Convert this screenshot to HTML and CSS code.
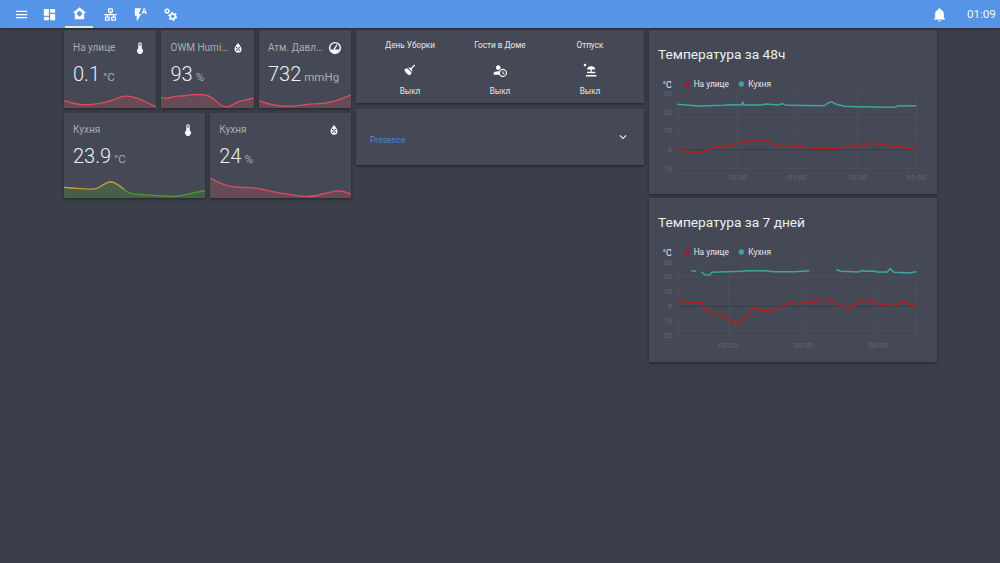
FILE: index.html
```html
<!DOCTYPE html>
<html lang="ru">
<head>
<meta charset="utf-8">
<title>Dashboard</title>
<link rel="stylesheet" href="styles.css">
</head>
<body>
<header class="topbar">
  <nav class="tabs">
    <a class="tab tab-menu"><svg class="ico" viewBox="0 0 24 24"><path d="M3,6H21V8H3V6M3,11H21V13H3V11M3,16H21V18H3V16Z"/></svg></a>
    <a class="tab tab-menu"><svg class="ico" viewBox="0 0 24 24"><path d="M3 3h8v11H3zM13 3h8v6h-8zM13 11h8v10h-8zM3 16h8v5H3z"/></svg></a>
    <a class="tab tab-active"><svg class="ico" viewBox="0 0 24 24"><path fill-rule="evenodd" d="M12 2 1 11h3.500v10h15V11H23zM12 7.500l4 3.200v2.300l-4 4-4-4v-2.300z"/></svg></a>
    <a class="tab"><svg class="ico" viewBox="0 0 24 24"><path d="M10,2C8.89,2 8,2.89 8,4V7C8,8.11 8.89,9 10,9H11V11H2V13H6V15H5C3.89,15 3,15.89 3,17V20C3,21.11 3.89,22 5,22H9C10.11,22 11,21.11 11,20V17C11,15.89 10.11,15 9,15H8V13H16V15H15C13.89,15 13,15.89 13,17V20C13,21.11 13.89,22 15,22H19C20.11,22 21,21.11 21,20V17C21,15.89 20.11,15 19,15H18V13H22V11H13V9H14C15.11,9 16,8.11 16,7V4C16,2.89 15.11,2 14,2H10M10,4H14V7H10V4M5,17H9V20H5V17M15,17H19V20H15V17Z"/></svg></a>
    <a class="tab"><svg class="ico" viewBox="0 0 24 24"><path d="M16.85,6.85H19.15L18,3.15M19,2L22.2,11H20.3L19.6,9H16.4L15.7,11H13.8L17,2M3,2V14H6V23L13,11H9L13,2H3Z"/></svg></a>
    <a class="tab"><svg class="ico" viewBox="0 0 24 24"><circle class="cog-small" cx="6.500" cy="6.500" r="3"/><circle class="cog-big" cx="15.500" cy="15" r="4"/><circle class="cog-teeth" cx="15.500" cy="15" r="6.300"/></svg></a>
  </nav>
  <div class="topbar-right">
    <svg class="ico bell" viewBox="0 0 24 24"><path d="M21,19V20H3V19L5,17V11C5,7.9 7.03,5.17 10,4.29C10,4.19 10,4.1 10,4A2,2 0 0,1 12,2A2,2 0 0,1 14,4C14,4.1 14,4.19 14,4.29C16.97,5.17 19,7.9 19,11V17L21,19M14,21A2,2 0 0,1 12,23A2,2 0 0,1 10,21"/></svg>
    <span class="clock">01:09</span>
  </div>
</header>

<main class="page">
  <section class="col col-sensors">
    <div class="row row-three">
      <article class="card sensor">
        <div class="sensor-head"><span class="sensor-name">На улице</span><svg class="ico sensor-ico" viewBox="0 0 24 24"><path d="M15 13V5A3 3 0 0 0 9 5V13A5 5 0 1 0 15 13M12 4A1 1 0 0 1 13 5V8H11V5A1 1 0 0 1 12 4Z"/></svg></div>
        <div class="sensor-value">0.1<span class="unit">°C</span></div>
        <svg class="spark" viewBox="10 195 280 45" preserveAspectRatio="none"><path class="spark-fill" d="M10 218L35 225Q60 232 85 230Q110 228 130 224Q150 220 170 211Q190 202 210 205Q230 208 260 223L290 238V240H10Z"/><path class="spark-line" d="M10 218L35 225Q60 232 85 230Q110 228 130 224Q150 220 170 211Q190 202 210 205Q230 208 260 223L290 238"/></svg>
      </article>
      <article class="card sensor">
        <div class="sensor-head"><span class="sensor-name">OWM Humidity</span><svg class="ico sensor-ico" viewBox="0 0 24 24"><path d="M12,3.25C12,3.25 6,10 6,14C6,17.32 8.69,20 12,20A6,6 0 0,0 18,14C18,10 12,3.25 12,3.25M14.47,9.97L15.53,11.03L9.53,17.03L8.47,15.97M9.75,10A1.25,1.25 0 0,1 11,11.25A1.25,1.25 0 0,1 9.75,12.5A1.25,1.25 0 0,1 8.5,11.25A1.25,1.25 0 0,1 9.75,10M14.25,14.5A1.25,1.25 0 0,1 15.5,15.75A1.25,1.25 0 0,1 14.25,17A1.25,1.25 0 0,1 13,15.75A1.25,1.25 0 0,1 14.25,14.5Z"/></svg></div>
        <div class="sensor-value">93<span class="unit">%</span></div>
        <svg class="spark" viewBox="303 195 279 45" preserveAspectRatio="none"><path class="spark-fill" d="M303 208L311.500 210.500Q320 213 332.500 208.500Q345 204 360 204Q375 204 387.500 201.500Q400 199 420 199.500Q440 200 450 206Q460 212 475 224Q490 236 500 236.500Q510 237 522.500 228.500Q535 220 547.500 218Q560 216 571 213L582 210V240H303Z"/><path class="spark-line" d="M303 208L311.500 210.500Q320 213 332.500 208.500Q345 204 360 204Q375 204 387.500 201.500Q400 199 420 199.500Q440 200 450 206Q460 212 475 224Q490 236 500 236.500Q510 237 522.500 228.500Q535 220 547.500 218Q560 216 571 213L582 210"/></svg>
      </article>
      <article class="card sensor">
        <div class="sensor-head"><span class="sensor-name">Атм. Давление</span><svg class="ico sensor-ico" viewBox="0 0 24 24"><path fill-rule="evenodd" d="M12 1.500a10.500 10.500 0 1 0 0 21 10.500 10.500 0 0 0 0-21zm0 2.500a8 8 0 0 1 7.600 10.500H4.400A8 8 0 0 1 12 4z"/><path d="m10.800 11.500 4-6 1.700 1-3.700 6.200a1.700 1.700 0 1 1-2-1.200z"/></svg></div>
        <div class="sensor-value">732<span class="unit">mmHg</span></div>
        <svg class="spark" viewBox="597 195 278 45" preserveAspectRatio="none"><path class="spark-fill" d="M597 218L618.500 225Q640 232 665 234Q690 236 720 232Q750 228 775 227Q800 226 820 220.500Q840 215 857.500 207.500L875 200V240H597Z"/><path class="spark-line" d="M597 218L618.500 225Q640 232 665 234Q690 236 720 232Q750 228 775 227Q800 226 820 220.500Q840 215 857.500 207.500L875 200"/></svg>
      </article>
    </div>
    <div class="row row-two">
      <article class="card sensor sensor-wide">
        <div class="sensor-head"><span class="sensor-name">Кухня</span><svg class="ico sensor-ico" viewBox="0 0 24 24"><path d="M15 13V5A3 3 0 0 0 9 5V13A5 5 0 1 0 15 13M12 4A1 1 0 0 1 13 5V8H11V5A1 1 0 0 1 12 4Z"/></svg></div>
        <div class="sensor-value">23.9<span class="unit">°C</span></div>
        <svg class="spark spark-wide" viewBox="10 208 426 60" preserveAspectRatio="none">
          <defs><linearGradient id="threshold" gradientUnits="userSpaceOnUse" x1="0" y1="208" x2="0" y2="268"><stop offset="0.55" stop-color="#d49a2a"/><stop offset="0.6" stop-color="#4f9a2e"/></linearGradient></defs>
          <path class="spark-fill-green" d="M10 236L35 238Q60 240 82.500 241.500Q105 243 115 236.500Q125 230 137.500 223.500Q150 217 162.500 222.500Q175 228 190 241.500Q205 255 232.500 257Q260 259 300 261.500Q340 264 355 262Q370 260 390 255Q410 250 423 248L436 246V268H10Z"/>
          <path class="spark-line spark-line-threshold" d="M10 236L35 238Q60 240 82.500 241.500Q105 243 115 236.500Q125 230 137.500 223.500Q150 217 162.500 222.500Q175 228 190 241.500Q205 255 232.500 257Q260 259 300 261.500Q340 264 355 262Q370 260 390 255Q410 250 423 248L436 246"/>
        </svg>
      </article>
      <article class="card sensor sensor-wide">
        <div class="sensor-head"><span class="sensor-name">Кухня</span><svg class="ico sensor-ico" viewBox="0 0 24 24"><path d="M12,3.25C12,3.25 6,10 6,14C6,17.32 8.69,20 12,20A6,6 0 0,0 18,14C18,10 12,3.25 12,3.25M14.47,9.97L15.53,11.03L9.53,17.03L8.47,15.97M9.75,10A1.25,1.25 0 0,1 11,11.25A1.25,1.25 0 0,1 9.75,12.5A1.25,1.25 0 0,1 8.5,11.25A1.25,1.25 0 0,1 9.75,10M14.25,14.5A1.25,1.25 0 0,1 15.5,15.75A1.25,1.25 0 0,1 14.25,17A1.25,1.25 0 0,1 13,15.75A1.25,1.25 0 0,1 14.25,14.5Z"/></svg></div>
        <div class="sensor-value">24<span class="unit">%</span></div>
        <svg class="spark spark-wide" viewBox="450 208 425 60" preserveAspectRatio="none"><path class="spark-fill" d="M450 208L470 218Q490 228 510 232.500Q530 237 557.500 236.500Q585 236 612.500 243Q640 250 665 254Q690 258 720 261.500Q750 265 770 260.500Q790 256 810 251Q830 246 840 247Q850 248 862.500 252L875 256V268H450Z"/><path class="spark-line" d="M450 208L470 218Q490 228 510 232.500Q530 237 557.500 236.500Q585 236 612.500 243Q640 250 665 254Q690 258 720 261.500Q750 265 770 260.500Q790 256 810 251Q830 246 840 247Q850 248 862.500 252L875 256"/></svg>
      </article>
    </div>
  </section>

  <section class="col col-middle">
    <article class="card modes">
      <div class="mode">
        <span class="mode-name">День Уборки</span>
        <svg class="ico mode-ico" viewBox="0 0 24 24"><path d="M19.36,2.72L20.78,4.14L15.06,9.85C16.13,11.39 16.28,13.24 15.38,14.44L9.06,8.12C10.26,7.22 12.11,7.37 13.65,8.44L19.36,2.72M5.93,17.57C3.92,15.56 2.69,13.16 2.35,10.92L7.23,8.83L14.67,16.27L12.58,21.15C10.34,20.81 7.94,19.58 5.93,17.57Z"/></svg>
        <span class="mode-state">Выкл</span>
      </div>
      <div class="mode">
        <span class="mode-name">Гости в Доме</span>
        <svg class="ico mode-ico" viewBox="0 0 24 24"><path d="M10.63,14.1C12.23,10.58 16.38,9.03 19.9,10.63C23.42,12.23 24.97,16.38 23.37,19.9C22.24,22.4 19.75,24 17,24C14.3,24 11.83,22.44 10.67,20H1V18C1.06,16.86 1.84,15.93 3.34,15.18C4.84,14.43 6.72,14.04 9,14C9.57,14 10.11,14.05 10.63,14.1V14.1M9,4C10.12,4.03 11.06,4.42 11.81,5.17C12.56,5.92 12.93,6.86 12.93,8C12.93,9.14 12.56,10.08 11.81,10.83C11.06,11.58 10.12,11.95 9,11.95C7.88,11.95 6.94,11.58 6.19,10.83C5.44,10.08 5.07,9.14 5.07,8C5.07,6.86 5.44,5.92 6.19,5.17C6.94,4.42 7.88,4.03 9,4M17,22A5,5 0 0,0 22,17A5,5 0 0,0 17,12A5,5 0 0,0 12,17A5,5 0 0,0 17,22M16,14H17.5V16.82L19.94,18.23L19.19,19.53L16,17.69V14Z"/></svg>
        <span class="mode-state">Выкл</span>
      </div>
      <div class="mode">
        <span class="mode-name">Отпуск</span>
        <svg class="ico mode-ico" viewBox="0 0 24 24"><path d="M1 2.500 4.500 1l1.500 3.500L2.500 6zM7 11c0-3.500 3-5.500 7-5.500s7 2 7 5.500zM13 11h2v5h-2zM7 15h14v2.500H7zM5 20.500h18V23H5z"/></svg>
        <span class="mode-state">Выкл</span>
      </div>
    </article>
    <article class="card presence">
      <div class="presence-row">
        <span class="presence-name">Presence</span>
        <svg class="ico chevron" viewBox="0 0 24 24"><path d="M7.41,8.58L12,13.17L16.59,8.58L18,10L12,16L6,10L7.41,8.58Z"/></svg>
      </div>
    </article>
  </section>

  <section class="col col-charts">
    <article class="card chart-card">
      <h2 class="chart-title">Температура за 48ч</h2>
      <svg class="chart" viewBox="3 130 864 360">
        <text class="chart-unit" x="44" y="181">°C</text>
        <circle class="dot-red" cx="117" cy="169" r="8"/><text class="legend" x="137" y="178">На улице</text>
        <circle class="dot-teal" cx="280" cy="169" r="8"/><text class="legend" x="301" y="178">Кухня</text>
        <path class="grid" d="M90 198H808M90 254H808M90 310H808M90 422H808M90 198V422M267 198V422M447 198V422M627 198V422M805 198V422"/>
        <path class="grid-zero" d="M90 366H808"/>
        <text class="axis axis-y" x="72" y="205">30</text><text class="axis axis-y" x="72" y="261">20</text><text class="axis axis-y" x="72" y="317">10</text><text class="axis axis-y" x="72" y="373">0</text><text class="axis axis-y" x="72" y="429">-10</text>
        <text class="axis axis-x" x="267" y="456">13:00</text><text class="axis axis-x" x="447" y="456">01:00</text><text class="axis axis-x" x="627" y="456">13:00</text><text class="axis axis-x" x="805" y="456">01:00</text>
        <path class="line-teal" d="M88 230 150 235 230 233 240 231 280 232 284 223 287 232 340 232 355 229 390 232 402 228 415 233 530 234 540 226 550 222 565 230 590 236 620 237 740 239 750 235 805 234"/>
        <path class="line-red" d="M90 360 100 366 120 372 150 375 180 365 210 356 230 359 260 350 290 342 315 336 360 342 380 351 440 356 500 362 560 362 620 357 665 347 710 350 730 355 760 356 780 362 805 366"/>
      </svg>
    </article>
    <article class="card chart-card">
      <h2 class="chart-title">Температура за 7 дней</h2>
      <svg class="chart" viewBox="3 130 864 360">
        <text class="chart-unit" x="44" y="181">°C</text>
        <circle class="dot-red" cx="117" cy="169" r="8"/><text class="legend" x="137" y="178">На улице</text>
        <circle class="dot-teal" cx="280" cy="169" r="8"/><text class="legend" x="301" y="178">Кухня</text>
        <path class="grid" d="M90 200H808M90 244H808M90 288H808M90 376H808M90 420H808M90 200V420M241 200V420M465 200V420M690 200V420M805 200V420"/>
        <path class="grid-zero" d="M90 332H808"/>
        <text class="axis axis-y" x="72" y="207">30</text><text class="axis axis-y" x="72" y="251">20</text><text class="axis axis-y" x="72" y="295">10</text><text class="axis axis-y" x="72" y="339">0</text><text class="axis axis-y" x="72" y="383">-10</text><text class="axis axis-y" x="72" y="427">-20</text>
        <text class="axis axis-x" x="241" y="456">00:00</text><text class="axis axis-x" x="465" y="456">00:00</text><text class="axis axis-x" x="690" y="456">00:00</text>
        <path class="line-teal" d="M130 225 145 227M160 229 170 237 185 238 192 230 280 227 295 225 350 225 380 228 440 228 484 225M565 222 580 227 630 229 642 224 645 227 680 226 685 229 718 229 726 219 738 230 785 232 805 228"/>
        <path class="line-red" d="M90 313 120 319 160 320 175 346 190 352 215 354 240 370 270 385 285 375 300 350 315 338 345 346 380 342 405 333 425 319 440 324 500 320 510 313 535 310 570 326 600 340 625 325 650 311 670 315 680 323 700 326 740 330 765 319 785 325 805 334"/>
      </svg>
    </article>
  </section>
</main>
</body>
</html>
```

FILE: styles.css
```css
* { box-sizing: border-box; }

html, body { height: 100%; }

body {
  margin: 0;
  background: #3a3f49;
  color: #fff;
  font-family: Roboto, "Noto Sans", sans-serif;
  overflow: hidden;
}

.ico { display: block; fill: currentColor; }

.topbar {
  height: 28px;
  background: #5594e6;
  display: flex;
  justify-content: space-between;
  padding-left: 7px;
  box-shadow: 0 1px 3px rgba(0, 0, 0, .35);
}

.tabs { display: flex; }

.tab {
  width: 30px;
  height: 28px;
  display: flex;
  align-items: center;
  justify-content: center;
  color: #fff;
}

.tab .ico { width: 15px; height: 15px; }

.tab-menu { width: 28px; }

.tab-active {
  width: 28px;
  margin: 0 2px;
  border-bottom: 2px solid #e6e6e6;
}

.cog-small, .cog-big { fill: none; stroke: currentColor; stroke-width: 2.6; }

.cog-teeth {
  fill: none;
  stroke: currentColor;
  stroke-width: 2;
  stroke-dasharray: 3 3.600;
}

.topbar-right {
  display: flex;
  align-items: center;
  gap: 20px;
  padding-right: 4px;
}

.bell { width: 15px; height: 15px; }

.clock { font-size: 11.6px; color: #f2f6fd; width: 29px; }

.page {
  display: flex;
  align-items: flex-start;
  gap: 5px;
  padding: 2px 0 0 63px;
}

.col { width: 288px; display: flex; flex-direction: column; }

.col-sensors { gap: 5px; padding-left: .5px; }

.col-middle { gap: 6px; }

.col-charts { gap: 4px; }

.card {
  background: #444955;
  box-shadow: 0 1px 3px rgba(0, 0, 0, .45);
}

.row { display: flex; gap: 5px; }

.sensor {
  flex: 1 1 0;
  min-width: 0;
  height: 78px;
  display: flex;
  flex-direction: column;
  padding-top: 10px;
}

.sensor-wide { height: 85px; padding-top: 9px; }

.sensor-head {
  display: flex;
  align-items: center;
  justify-content: space-between;
  padding: 0 9px 0 9.500px;
  height: 15px;
}

.sensor-wide .sensor-head { padding-right: 10px; }

.sensor-name {
  font-size: 10px;
  color: #a9adb5;
  white-space: nowrap;
  overflow: hidden;
  text-overflow: ellipsis;
  min-width: 0;
}

.sensor-ico { flex: none; width: 14px; height: 14px; color: #f5f5f5; }

.sensor-value {
  font-size: 20px;
  font-weight: 300;
  color: #eeeff1;
  padding: 6px 9px 0 9.500px;
  line-height: 26px;
  white-space: nowrap;
}

.unit { font-size: 11.5px; color: #a9adb5; margin-left: 3px; font-weight: 400; }

.spark { display: block; width: 100%; height: 15px; margin-top: auto; }

.spark-wide { height: 20px; }

.spark-fill { fill: rgba(224, 76, 92, .22); stroke: none; }

.spark-fill-green { fill: rgba(79, 154, 46, .28); stroke: none; }

.spark-line {
  fill: none;
  stroke: #d94c5f;
  stroke-width: 4;
  stroke-linejoin: round;
}

.spark-line-threshold { stroke: url(#threshold); }

.modes {
  height: 73px;
  display: flex;
  padding-left: 9px;
}

.mode {
  width: 90px;
  display: flex;
  flex-direction: column;
  align-items: center;
  font-size: 8.2px;
  color: #e6e7ea;
  padding-top: 10px;
}

.mode-name { line-height: 11px; }

.mode-ico { width: 14px; height: 14px; margin: 12px 0 9px; color: #fff; }

.mode-state { line-height: 11px; }

.presence {
  height: 56px;
  padding: 16px 14px 0;
}

.presence-row {
  display: flex;
  justify-content: space-between;
  border-top: 1px solid #484d59;
  padding-top: 7px;
}

.presence-name { font-size: 8.5px; color: #4f86d4; line-height: 14px; }

.chevron { width: 14px; height: 14px; margin-top: -3px; color: #f0f0f0; }

.chart-card { height: 164px; padding-top: 15px; }

.chart-title {
  margin: 0;
  padding: 0 9px;
  font-size: 13.7px;
  font-weight: 400;
  line-height: 18px;
  color: #eeeff1;
}

.chart { display: block; width: 288px; height: 120px; margin-top: 8px; }

.chart-unit { font-size: 26px; fill: #e8e8ea; }

.legend { font-size: 25px; fill: #e8e8ea; }

.dot-red { fill: #a11c2c; }

.dot-teal { fill: #3ba6a0; }

.grid { fill: none; stroke: #4e535f; stroke-width: 2; }

.grid-zero { fill: none; stroke: #343842; stroke-width: 2; }

.axis { font-size: 23px; fill: #636873; }

.axis-y { text-anchor: end; }

.axis-x { text-anchor: middle; }

.line-teal { fill: none; stroke: #3ba6a0; stroke-width: 4.500; stroke-linejoin: round; }

.line-red { fill: none; stroke: #b81c1c; stroke-width: 4.500; stroke-linejoin: round; }
```
